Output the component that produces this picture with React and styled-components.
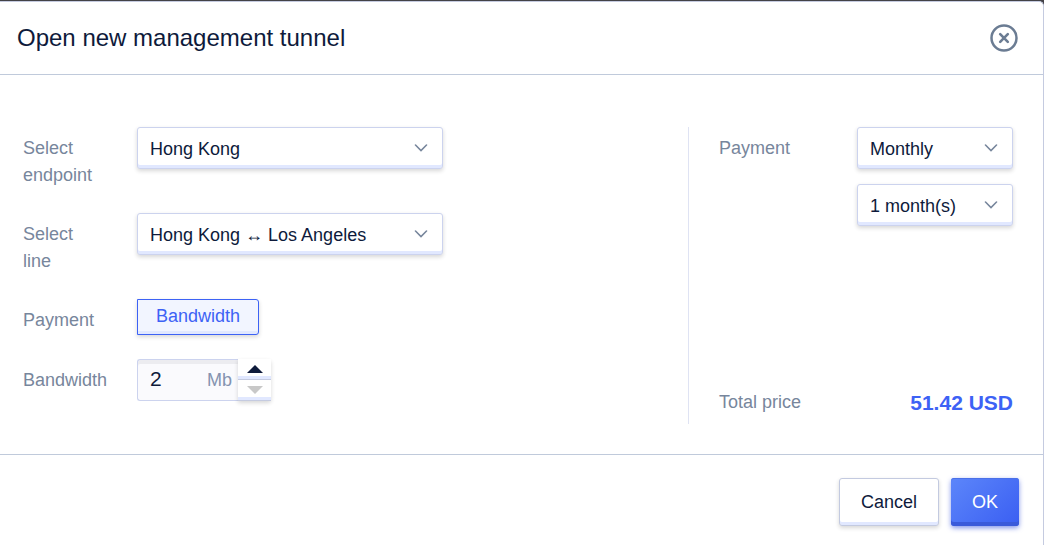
import React, { useState } from 'react';
import styled, { createGlobalStyle, css } from 'styled-components';

const GlobalStyle = createGlobalStyle`
  * {
    box-sizing: border-box;
  }

  body {
    margin: 0;
    background: #434247;
    color: #0e1a3b;
    font-family: "Liberation Sans", Arial, sans-serif;
    font-size: 18px;
    line-height: 27px;
  }

  button, input, select {
    font: inherit;
    color: inherit;
    margin: 0;
  }
`;

const raised = css`
  box-shadow: inset 0 -3px 0 #e1e8ff, 0 2px 4px rgba(0, 0, 0, 0.16);
`;

const Modal = styled.form`
  display: flex;
  flex-direction: column;
  min-height: calc(100vh - 1px);
  margin-top: 1px;
  background: #fff;
  border: solid #c5cbe0;
  border-width: 1px 1px 0 0;
  border-top-right-radius: 5px;
`;

const Header = styled.header`
  display: flex;
  align-items: center;
  justify-content: space-between;
  padding: 22px 25px 22px 17px;
  border-bottom: 1px solid #c0cadb;
`;

const Title = styled.h1`
  margin: 0;
  font-size: 24px;
  font-weight: normal;
  line-height: 28px;
`;

const CloseButton = styled.button`
  display: flex;
  padding: 0;
  border: 0;
  background: none;
  color: #6b7c93;
  cursor: pointer;
`;

const Body = styled.div`
  display: grid;
  grid-template-columns: 1fr 325px;
  padding: 52px 30px 30px 23px;
`;

const Fields = styled.div`
  display: flex;
  flex-direction: column;
  gap: 24px;
`;

const Field = styled.div`
  display: grid;
  grid-template-columns: 114px auto;
  justify-content: start;
  align-items: start;
`;

const Label = styled.label`
  padding: 8px 0 0;
  color: #77869c;

  & span {
    display: block;
  }
`;

const SelectWrapper = styled.div`
  display: grid;
  align-items: center;
  width: ${({ $wide }) => ($wide ? '306px' : '156px')};

  & > * {
    grid-area: 1 / 1;
  }

  & svg {
    justify-self: end;
    margin-right: 15px;
    color: #77869c;
    pointer-events: none;
  }
`;

const StyledSelect = styled.select`
  appearance: none;
  width: 100%;
  height: 42px;
  padding: 2px 36px 0 12px;
  background: #fff;
  border: 1px solid #ccd3ee;
  border-radius: 3px;
  ${raised}
`;

const OptionGroup = styled.div`
  display: flex;
`;

const OptionButton = styled.button`
  height: 36px;
  padding: 0 18px 2px;
  color: #3d62f5;
  background: #f2f5ff;
  border: 1px solid #3d62f5;
  border-radius: 0 3px 3px 0;
  cursor: pointer;
  ${raised}
`;

const NumberBox = styled.div`
  display: flex;
  height: 42px;
`;

const NumberField = styled.div`
  display: flex;
  align-items: center;
  width: 101px;
  padding: 0 6px 0 12px;
  background: #fafafd;
  border: solid #ccd3ee;
  border-width: 1px 0 1px 1px;
  border-radius: 3px 0 0 3px;
  box-shadow: inset 0 4px 0 #ececf0;
  color: #8593b0;
`;

const NumberInput = styled.input`
  flex: 1;
  min-width: 0;
  padding: 0 0 4px;
  border: 0;
  outline: 0;
  background: none;
  color: #0e1a3b;
  font-size: 21px;
`;

const Stepper = styled.div`
  display: flex;
  flex-direction: column;
  width: 33px;
  border-radius: 0 3px 3px 0;
  box-shadow: 0 2px 4px rgba(0, 0, 0, 0.16);
`;

const StepButton = styled.button`
  display: flex;
  flex: 1;
  align-items: center;
  justify-content: center;
  padding: 0;
  background: #fff;
  border: 0;
  border-bottom: 1px solid #c5cbe0;
  box-shadow: inset 0 -3px 0 #e1e8ff;
  color: #0e1a3b;
  cursor: pointer;

  &:disabled {
    color: #c8c8c8;
    cursor: default;
  }
`;

const Summary = styled.section`
  display: flex;
  flex-direction: column;
  justify-content: space-between;
  min-height: 297px;
  padding-left: 30px;
  border-left: 1px solid #dfe3f3;
`;

const Period = styled.div`
  display: flex;
  align-items: flex-start;
  justify-content: space-between;
`;

const PeriodSelects = styled.div`
  display: flex;
  flex-direction: column;
  gap: 15px;
`;

const Total = styled.div`
  display: flex;
  align-items: center;
  justify-content: space-between;
  padding-bottom: 8px;
  color: #77869c;

  & strong {
    color: #3d62f5;
    font-size: 21px;
  }
`;

const Footer = styled.footer`
  display: flex;
  flex: 1;
  align-items: flex-start;
  justify-content: flex-end;
  gap: 12px;
  padding: 23px 24px 19px;
  border-top: 1px solid #c0cadb;
`;

const Button = styled.button`
  height: 48px;
  padding: 0 21px;
  background: #fff;
  border: 1px solid #c3cae0;
  border-radius: 3px;
  cursor: pointer;
  ${raised}

  ${({ $primary }) => $primary && css`
    color: #fff;
    background: linear-gradient(135deg, #5c86fa, #3a5ef2);
    border: 0;
    box-shadow: inset 0 -4px 0 #3a5ada, inset 0 1px 0 #4a70e8, 0 2px 5px rgba(50, 80, 220, 0.6);
  `}
`;

function CloseIcon() {
  return (
    <svg width="28" height="28" viewBox="0 0 28 28" fill="none" stroke="currentColor" strokeLinecap="round" aria-hidden="true">
      <circle cx="14" cy="14" r="12.5" strokeWidth="2.5" />
      <path d="M10.2 10.2l7.6 7.6M17.8 10.2l-7.6 7.6" strokeWidth="2.6" />
    </svg>
  );
}

function ChevronIcon() {
  return (
    <svg width="14" height="8" viewBox="0 0 14 8" fill="none" stroke="currentColor" strokeWidth="1.6" strokeLinecap="round" aria-hidden="true">
      <path d="M1.5 1L7 6.5L12.5 1" />
    </svg>
  );
}

function TriangleIcon({ down }) {
  return (
    <svg width="16" height="8" viewBox="0 0 16 8" fill="currentColor" aria-hidden="true">
      <path d={down ? 'M0 0H16L8 8Z' : 'M0 8H16L8 0Z'} />
    </svg>
  );
}

function Select({ options, wide, ...props }) {
  return (
    <SelectWrapper $wide={wide}>
      <StyledSelect {...props}>
        {options.map((option) => <option key={option}>{option}</option>)}
      </StyledSelect>
      <ChevronIcon />
    </SelectWrapper>
  );
}

const MIN_BANDWIDTH = 2;

function App() {
  const [bandwidth, setBandwidth] = useState(MIN_BANDWIDTH);

  return (
    <>
      <GlobalStyle />
      <Modal onSubmit={(e) => e.preventDefault()}>
        <Header>
          <Title>Open new management tunnel</Title>
          <CloseButton type="button" aria-label="Close"><CloseIcon /></CloseButton>
        </Header>

        <Body>
          <Fields>
            <Field>
              <Label htmlFor="endpoint"><span>Select</span> <span>endpoint</span></Label>
              <Select id="endpoint" wide options={['Hong Kong']} />
            </Field>
            <Field>
              <Label htmlFor="line"><span>Select</span> <span>line</span></Label>
              <Select id="line" wide options={['Hong Kong ↔ Los Angeles']} />
            </Field>
            <Field>
              <Label as="span" id="payment-label">Payment</Label>
              <OptionGroup role="group" aria-labelledby="payment-label">
                <OptionButton type="button" aria-pressed="true">Bandwidth</OptionButton>
              </OptionGroup>
            </Field>
            <Field>
              <Label htmlFor="bandwidth">Bandwidth</Label>
              <NumberBox>
                <NumberField>
                  <NumberInput
                    id="bandwidth"
                    inputMode="numeric"
                    value={bandwidth}
                    onChange={(e) => setBandwidth(Number(e.target.value) || MIN_BANDWIDTH)}
                  />
                  <span>Mb</span>
                </NumberField>
                <Stepper>
                  <StepButton type="button" aria-label="Increase" onClick={() => setBandwidth(bandwidth + 1)}>
                    <TriangleIcon />
                  </StepButton>
                  <StepButton
                    type="button"
                    aria-label="Decrease"
                    disabled={bandwidth <= MIN_BANDWIDTH}
                    onClick={() => setBandwidth(bandwidth - 1)}
                  >
                    <TriangleIcon down />
                  </StepButton>
                </Stepper>
              </NumberBox>
            </Field>
          </Fields>

          <Summary>
            <Period>
              <Label htmlFor="period">Payment</Label>
              <PeriodSelects>
                <Select id="period" options={['Monthly']} />
                <Select aria-label="Number of months" options={['1 month(s)']} />
              </PeriodSelects>
            </Period>
            <Total>
              <span>Total price</span>
              <strong>51.42 USD</strong>
            </Total>
          </Summary>
        </Body>

        <Footer>
          <Button type="button">Cancel</Button>
          <Button type="submit" $primary>OK</Button>
        </Footer>
      </Modal>
    </>
  );
}

export default App;
